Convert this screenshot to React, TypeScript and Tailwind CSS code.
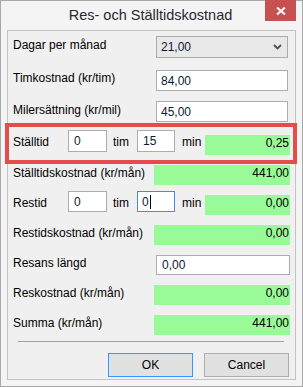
import React from "react";

function Field({ value, className }: { value: string; className: string }) {
  return (
    <div className={`bg-white border border-[#abadb3] flex items-center text-[#0b1a33] ${className}`}>
      {value}
    </div>
  );
}

function Green({ value, className }: { value: string; className: string }) {
  return <div className={`bg-[#98fb98] h-[20px] text-right pr-[1px] leading-[16px] ${className}`}>{value}</div>;
}

export default function App() {
  return (
    <div className="w-[303px] h-[387px] bg-[#f4f4f4] border border-[#a9a9a9] flex flex-col font-['Liberation_Sans',Arial,sans-serif] text-[12px] leading-[16px] text-black">
      {/* title bar */}
      <div className="h-[29px] flex items-start shrink-0">
        <div className="w-[35px]" />
        <div className="flex-1 text-center text-[14.5px] leading-[20px] pt-[4px] text-[#242a33]">
          Res- och Ställtidskostnad
        </div>
        <div className="w-[31px] h-[21px] -mt-px mr-[6px] bg-[#c75050] flex items-center justify-center">
          <svg width="10" height="8" viewBox="0 0 10 8">
            <path d="M1 0.5 L9 7.5 M9 0.5 L1 7.5" stroke="#ffffff" strokeWidth="2" />
          </svg>
        </div>
      </div>

      {/* client area */}
      <div className="mx-[6px] h-[350px] shrink-0 border border-[#c3c3c3] bg-[#f0f0f0] flex flex-col">
        {/* Dagar per månad */}
        <div className="mt-[5px] flex items-start">
          <div className="w-[148px] pl-[5px] pt-[1px]">Dagar per månad</div>
          <div className="w-[132px] h-[22px] border border-[#acacac] bg-[#e8e8e8] flex items-center justify-between pl-[4px] pr-[5px] text-[#0b1a33]">
            <span>21,00</span>
            <svg width="9" height="6" viewBox="0 0 9 6">
              <path d="M1 1 L4.5 4.5 L8 1" fill="none" stroke="#505050" strokeWidth="1.8" />
            </svg>
          </div>
        </div>

        {/* Timkostnad */}
        <div className="mt-[12px] flex items-start">
          <div className="w-[148px] pl-[5px]">Timkostnad (kr/tim)</div>
          <Field value="84,00" className="w-[132px] h-[21px] pl-[4px]" />
        </div>

        {/* Milersättning */}
        <div className="mt-[10px] flex items-start">
          <div className="w-[148px] pl-[5px] pt-[1px]">Milersättning (kr/mil)</div>
          <Field value="45,00" className="w-[132px] h-[21px] pl-[4px]" />
        </div>

        {/* Ställtid (highlighted) */}
        <div className="mt-[1px] -ml-[3px] w-[292px] h-[41px] border-[4px] border-[#e74c4c] flex items-start">
          <div className="w-[59px] pl-[4px] mt-[7px]">Ställtid</div>
          <Field value="0" className="mt-[3px] w-[39px] h-[22px] pl-[5px]" />
          <div className="w-[30px] pl-[6px] mt-[7px]">tim</div>
          <Field value="15" className="mt-[3px] w-[38px] h-[22px] pl-[5px]" />
          <div className="w-[30px] pl-[7px] mt-[7px]">min</div>
          <Green value="0,25" className="mt-[8px] w-[85px]" />
        </div>

        {/* Ställtidskostnad */}
        <div className="mt-[1px] flex items-start">
          <div className="w-[146px] pl-[5px]">Ställtidskostnad (kr/mån)</div>
          <Green value="441,00" className="w-[136px]" />
        </div>

        {/* Restid */}
        <div className="mt-[6px] flex items-start">
          <div className="w-[60px] pl-[5px] mt-[4px]">Restid</div>
          <Field value="0" className="w-[39px] h-[21px] pl-[5px]" />
          <div className="w-[30px] pl-[6px] mt-[4px]">tim</div>
          <div className="w-[38px] h-[21px] bg-white border border-[#3d8ee0] flex items-center pl-[4px] text-[#0b1a33]">
            <span>0</span>
            <span className="ml-[1px] w-px h-[14px] bg-black" />
          </div>
          <div className="w-[30px] pl-[7px] mt-[4px]">min</div>
          <Green value="0,00" className="mt-[4px] w-[85px]" />
        </div>

        {/* Restidskostnad */}
        <div className="mt-[10px] flex items-start">
          <div className="w-[146px] pl-[5px]">Restidskostnad (kr/mån)</div>
          <Green value="0,00" className="w-[136px]" />
        </div>

        {/* Resans längd */}
        <div className="mt-[10px] flex items-start">
          <div className="w-[148px] pl-[5px]">Resans längd</div>
          <Field value="0,00" className="w-[134px] h-[20px] pl-[5px]" />
        </div>

        {/* Reskostnad */}
        <div className="mt-[10px] flex items-start">
          <div className="w-[146px] pl-[5px]">Reskostnad (kr/mån)</div>
          <Green value="0,00" className="w-[136px]" />
        </div>

        {/* Summa */}
        <div className="mt-[10px] flex items-start">
          <div className="w-[146px] pl-[5px]">Summa (kr/mån)</div>
          <Green value="441,00" className="w-[136px]" />
        </div>

        {/* separator */}
        <div className="mt-[6px] ml-[10px] w-[266px] h-px bg-[#a0a0a0]" />

        {/* buttons */}
        <div className="mt-[11px] flex items-start">
          <div className="ml-[100px] w-[85px] h-[24px] border border-[#3399ff] bg-[#e1e1e1] flex items-center justify-center">
            OK
          </div>
          <div className="ml-[11px] w-[85px] h-[24px] border border-[#adadad] bg-[#e1e1e1] flex items-center justify-center">
            Cancel
          </div>
        </div>
      </div>
    </div>
  );
}
